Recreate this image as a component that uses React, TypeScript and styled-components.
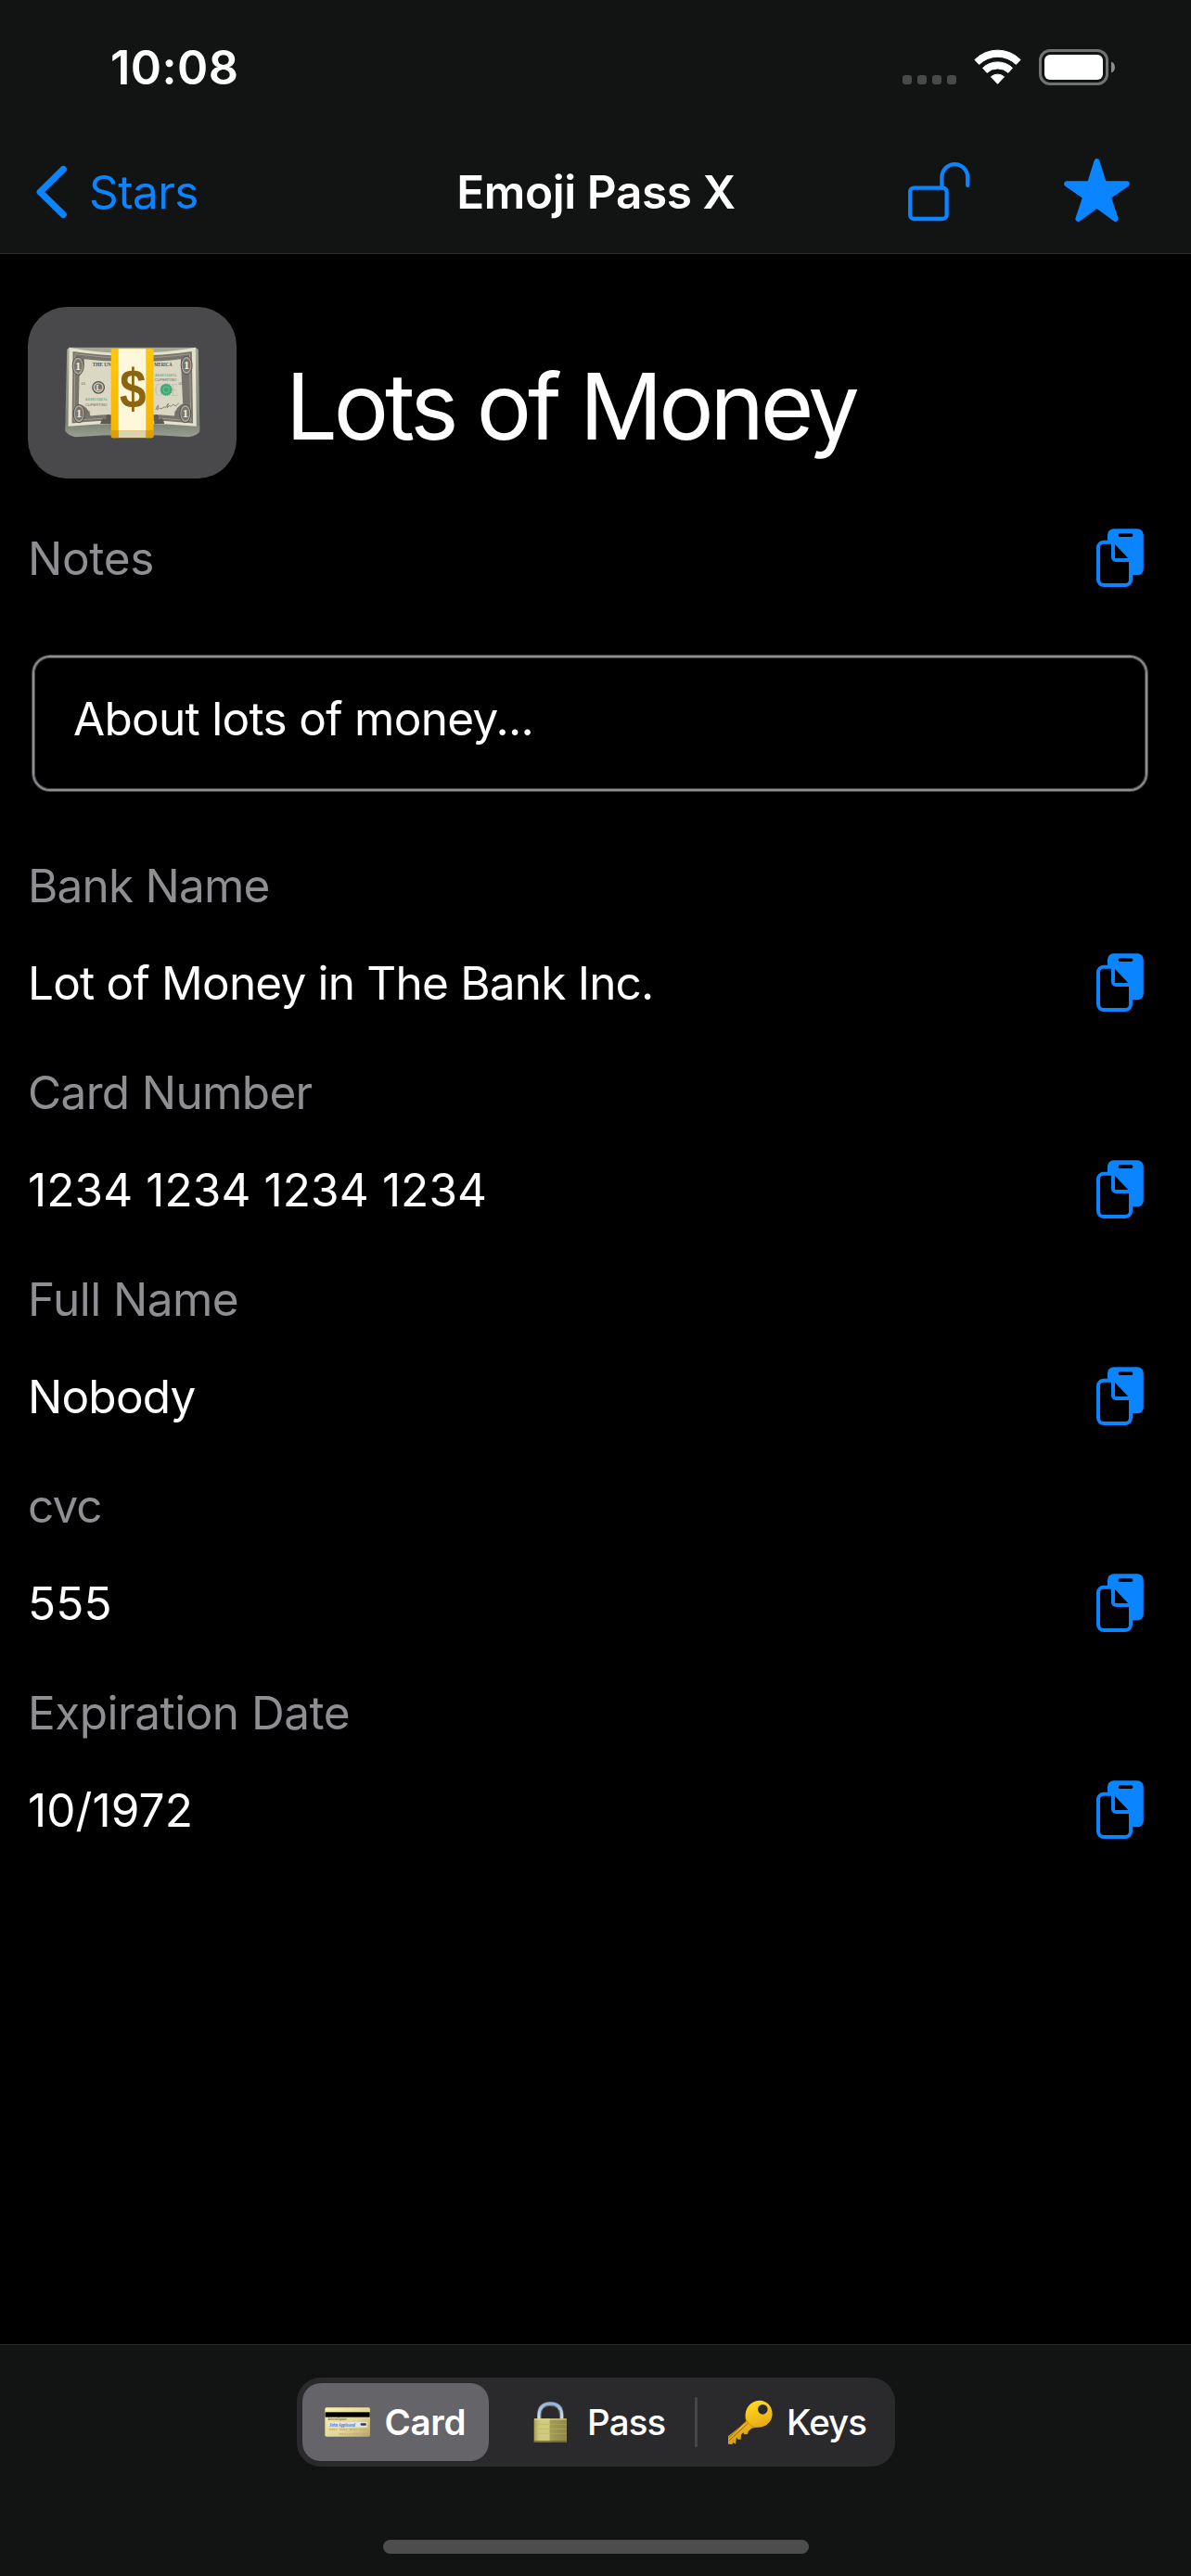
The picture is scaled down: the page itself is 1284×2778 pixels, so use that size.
import React from "react";
import styled, { createGlobalStyle } from "styled-components";

const BLUE = "#0a84ff";
const GRAY = "#8e8e93";
const GRAY_EDGE = "#47474a";
const BAR = "#121413";

const GlobalStyle = createGlobalStyle`
  *, *::before, *::after { box-sizing: border-box; }
  html, body { margin: 0; padding: 0; background: #000; }
  body { font-family: Inter, "Liberation Sans", sans-serif; -webkit-font-smoothing: antialiased; }
  svg { display: block; flex: none; }
`;

const Screen = styled.div`
  display: flex;
  flex-direction: column;
  width: 1284px;
  height: 2778px;
  background: #000;
  color: #fff;
  overflow: hidden;
`;

const TopBar = styled.header`
  display: flex;
  flex-direction: column;
  height: 274px;
  background: ${BAR};
  border-bottom: 1px solid #2a2b2b;
`;

const StatusRow = styled.div`
  display: flex;
  align-items: center;
  justify-content: space-between;
  height: 146px;
  padding: 0 81px 0 119px;
`;

const Text = styled.span<{ $track?: number }>`
  white-space: nowrap;
  letter-spacing: ${(p) => p.$track ?? 0}px;
`;

const Clock = styled(Text)`
  font-size: 50.5px;
  font-weight: 600;
  line-height: 60px;
`;

const StatusIcons = styled.div`
  display: flex;
  align-items: center;
  gap: 19px;
`;

const NavRow = styled.nav`
  display: grid;
  grid-template-columns: 1fr auto 1fr;
  align-items: center;
  height: 122px;
  padding: 0 66px 0 39px;
`;

const BackButton = styled.button`
  display: flex;
  align-items: center;
  gap: 24px;
  padding: 0;
  border: 0;
  background: none;
  color: ${BLUE};
  font: inherit;
`;

const BackLabel = styled(Text)`
  font-size: 49.5px;
  line-height: 60px;
`;

const NavTitle = styled(Text)`
  font-size: 49.5px;
  font-weight: 600;
  line-height: 60px;
  padding-left: 28px;
`;

const NavActions = styled.div`
  display: flex;
  align-items: center;
  justify-content: flex-end;
  gap: 101px;
`;

const Content = styled.main`
  flex: 1;
  display: flex;
  flex-direction: column;
  padding: 57px 47px 0 30px;
`;

const Heading = styled.div`
  display: flex;
  align-items: center;
  height: 185px;
  gap: 53px;
  margin-bottom: 53px;
`;

const EmojiTile = styled.div`
  display: flex;
  align-items: center;
  justify-content: center;
  width: 225px;
  height: 185px;
  border-radius: 42px;
  background: #49494b;
`;

const ItemTitle = styled(Text)`
  font-size: 99px;
  line-height: 120px;
  padding-top: 29px;
`;

const Row = styled.div`
  display: flex;
  align-items: center;
  justify-content: space-between;
  height: 66px;
  padding-right: 3px;
`;

const Label = styled(Text)`
  color: ${GRAY};
  font-size: 49.5px;
  line-height: 60px;
`;

const Value = styled(Text)`
  font-size: 49.5px;
  line-height: 60px;
`;

const NotesBox = styled.div`
  height: 146px;
  margin: 72px 0 72px 5px;
  padding: 36px 42px;
  border: 2px solid ${GRAY};
  border-radius: 19px;
  box-shadow: 0 0 0 1px ${GRAY_EDGE}, inset 0 0 0 1px ${GRAY_EDGE};
  display: flex;
  align-items: flex-start;
`;

const Field = styled.section`
  display: flex;
  flex-direction: column;
  gap: 42px;
  height: 223px;
`;

const BottomBar = styled.footer`
  display: flex;
  flex-direction: column;
  align-items: center;
  height: 250px;
  padding-top: 35px;
  background: ${BAR};
  border-top: 1px solid #2a2b2b;
`;

const Segments = styled.div`
  display: flex;
  align-items: center;
  width: 645px;
  height: 96px;
  padding: 6px;
  border-radius: 26px;
  background: #2a2a2c;
`;

const Segment = styled.button<{ $width: number; $inset: number; $active?: boolean }>`
  display: flex;
  align-items: center;
  gap: 15px;
  width: ${(p) => p.$width}px;
  height: 84px;
  padding: 0 0 0 ${(p) => p.$inset}px;
  border: 0;
  border-radius: 20px;
  background: ${(p) => (p.$active ? "#656469" : "transparent")};
  color: #fff;
  font-family: inherit;
  font-size: 38.5px;
  font-weight: ${(p) => (p.$active ? 600 : 500)};
  line-height: 48px;
`;

const EmojiSlot = styled.span`
  display: flex;
  justify-content: center;
  width: 49px;
`;

const Divider = styled.div`
  width: 3px;
  height: 54px;
  border-radius: 2px;
  background: #464649;
`;

const HomeIndicator = styled.div`
  width: 459px;
  height: 15px;
  margin-top: 79px;
  border-radius: 8px;
  background: #4d4d4d;
`;

const SignalDots = () => (
  <svg width="58" height="40" viewBox="0 0 58 40" fill="#484948">
    {[0, 16, 32, 48].map((x) => (
      <rect key={x} x={x} y="28" width="10" height="10" rx="3" />
    ))}
  </svg>
);

const Wifi = () => (
  <svg width="51" height="40" viewBox="0 0 51 40" fill="#fff" stroke="#fff" strokeWidth="1" strokeLinejoin="round">
    <path d="M0.9 11.4A34.6 34.6 0 0 1 50.1 11.4L45.4 16.4A28.4 28.4 0 0 0 5.6 16.4Z" />
    <path d="M9.5 20.3A23.2 23.2 0 0 1 41.5 20.3L37 25.4A17 17 0 0 0 14 25.4Z" />
    <path d="M18.4 29.8A10.8 10.8 0 0 1 32.6 29.8L25.5 37.3Z" />
  </svg>
);

const Battery = () => (
  <svg width="83" height="40" viewBox="0 0 83 40">
    <rect x="1.5" y="1.5" width="72" height="36" rx="10.5" fill="none" stroke="#717272" strokeWidth="3" />
    <rect x="6" y="6" width="63" height="27" rx="6" fill="#fff" />
    <path d="M78 13.5C83.3 15 83.3 24 78 25.5Z" fill="#8a8b8a" />
  </svg>
);

const Chevron = () => (
  <svg width="33" height="58" viewBox="0 0 33 58" fill="none" stroke={BLUE} strokeWidth="7.2" strokeLinecap="round" strokeLinejoin="round">
    <path d="M29.2 4.6L4.2 29L29.2 53.4" />
  </svg>
);

const OpenLock = () => (
  <svg width="67" height="64" viewBox="0 0 67 64" fill="none" stroke={BLUE} strokeWidth="4.3" strokeLinecap="round">
    <rect x="2.2" y="27.6" width="39.4" height="33.4" rx="4" />
    <path d="M36.4 27.6V16.4A13.9 14.2 0 0 1 64.2 16.4V25" />
  </svg>
);

const Star = () => (
  <svg width="71" height="72" viewBox="0 0 71 72" fill={BLUE} stroke={BLUE} strokeWidth="6" strokeLinejoin="round">
    <path d="M35.5 3.2L43 26.9L67.8 27.2L47.7 41.3L55.6 65L35.5 50.4L15.4 65L23.3 41.3L3.2 27.2L28 26.9Z" />
  </svg>
);

const CopyIcon = () => (
  <svg width="52" height="66" viewBox="0 0 52 66">
    <rect x="12" y="1.3" width="38.8" height="50" rx="6.5" fill={BLUE} />
    <rect x="23.7" y="6.3" width="15.6" height="3.7" rx="1.8" fill="#000" />
    <path
      d="M18 15.7H8a6 6 0 0 0-6 6V56a6 6 0 0 0 6 6H31a6 6 0 0 0 6-6V35H21a3 3 0 0 1-3-3Z"
      fill="#000"
      stroke={BLUE}
      strokeWidth="4"
      strokeLinejoin="round"
    />
    <path d="M20 18V33H34.3Z" fill="#000" />
  </svg>
);

const Bill = () => (
  <>
    <path d="M221 190Q320 210 426 208Q535 208 631 190L634 446Q530 436 426 437Q320 436 218 446Z" fill="#e4e2cf" />
    <path d="M233 203Q330 218 426 217Q525 217 619 203L623 436Q525 426 426 427Q325 426 230 436Z" fill="#77746c" />
    <path d="M240 211Q330 225 426 224Q525 224 612 211L616 428Q525 418 426 419Q325 418 237 428Z" fill="none" stroke="#b4b09f" strokeWidth="2" />
    <path d="M270 228Q345 238 426 236Q510 238 583 228L590 372Q566 382 562 412Q500 406 426 408Q350 406 290 412Q282 380 252 374L254 284Q272 262 270 228Z" fill="#dad8c4" />
  </>
);

const MoneyEmoji = () => (
  <svg width="146" height="99" viewBox="208 188 438 298">
    <defs>
      <linearGradient id="billEdge" x1="0" y1="0" x2="0" y2="1">
        <stop offset="0" stopColor="#a5a995" />
        <stop offset="0.85" stopColor="#7d8475" />
        <stop offset="1" stopColor="#9aa091" />
      </linearGradient>
      <linearGradient id="bandGold" x1="0" y1="0" x2="0" y2="1">
        <stop offset="0" stopColor="#fdc80c" />
        <stop offset="0.9" stopColor="#f8b500" />
        <stop offset="1" stopColor="#cf9500" />
      </linearGradient>
    </defs>
    <path d="M214 196L222 190H631L640 196L645 462Q640 475 608 481Q520 474 426 474Q330 474 241 481Q212 474 208 460Z" fill="url(#billEdge)" />
    <Bill />
    {[[250, 250], [602, 248], [253, 405], [598, 405]].map(([x, y]) => (
      <g key={`${x}-${y}`}>
        <ellipse cx={x} cy={y} rx="18" ry="29" fill="#aaa79a" stroke="#514f4a" strokeWidth="3" />
        <ellipse cx={x} cy={y} rx="13" ry="22" fill="#77746c" />
        <text x={x} y={y + 13} textAnchor="middle" fontFamily="Liberation Serif, serif" fontWeight="700" fontSize="38" fill="#eeebda">1</text>
      </g>
    ))}
    <g fontFamily="Liberation Serif, serif" fontWeight="700" fontSize="20" fill="#55524b">
      <text x="297" y="252" textLength="60" lengthAdjust="spacingAndGlyphs">THE UN</text>
      <text x="497" y="251" textLength="58" lengthAdjust="spacingAndGlyphs">MERICA</text>
    </g>
    <g fontFamily="Liberation Sans, sans-serif" fontSize="13" fill="#66635c">
      <text x="273" y="380" textLength="72" lengthAdjust="spacingAndGlyphs">CUPERTINO</text>
      <text x="498" y="299" textLength="72" lengthAdjust="spacingAndGlyphs">CUPERTINO</text>
      <text x="260" y="312">01</text>
      <text x="576" y="312">01</text>
      <text x="276" y="404">01</text>
      <text x="562" y="404">01</text>
    </g>
    <g fontFamily="Liberation Sans, sans-serif" fontWeight="700" fontSize="11" fill="#62b68c">
      <text x="273" y="363" textLength="72">A84810481L</text>
      <text x="499" y="284" textLength="72">A84810481L</text>
    </g>
    <circle cx="316" cy="320" r="19" fill="#c9c6b4" stroke="#55534c" strokeWidth="4" />
    <circle cx="316" cy="320" r="12" fill="#77746c" />
    <text x="316" y="329" textAnchor="middle" fontFamily="Liberation Serif, serif" fontWeight="700" fontSize="24" fill="#eeebda">L</text>
    <text x="499" y="347" textLength="75" lengthAdjust="spacingAndGlyphs" fontFamily="Liberation Serif, serif" fontSize="56" fill="#c4c1b0">ONE</text>
    <circle cx="536" cy="327" r="18" fill="#3fa877" stroke="#3fa877" strokeWidth="4" strokeDasharray="4 3" />
    <circle cx="536" cy="327" r="10" fill="none" stroke="#8fd0b0" strokeWidth="2" />
    <path d="M502 392q6-16 8-14t-3 14q8-8 10-4t8-2 8 0l10-14-4 14q8-10 10-6t6-2 8 0 14-8" fill="none" stroke="#5a5852" strokeWidth="2" />
    <path d="M322 438Q330 410 340 425Q340 400 357 412V438Z M530 438Q524 410 512 425Q512 400 497 412V438Z" fill="#5d5a53" />
    <path d="M357 195H495V478Q495 484 489 484H363Q357 484 357 478Z" fill="url(#bandGold)" />
    <path d="M381 195H470V460H381Z" fill="#fff7d9" />
    <path d="M381 460H470V483H381Z" fill="#d9d1b0" />
    <path d="M357 459H381V484H363Q357 484 357 478Z M470 459H495V478Q495 484 489 484H470Z" fill="#dba000" />
    <text x="428" y="386" textAnchor="middle" fontFamily="Liberation Sans, sans-serif" fontWeight="700" fontSize="176" textLength="86" lengthAdjust="spacingAndGlyphs" fill="#8c6510">$</text>
  </svg>
);

const CardEmoji = () => (
  <svg width="49.3" height="32" viewBox="153 260 148 96">
    <defs>
      <linearGradient id="cardFace" x1="0" y1="0" x2="1" y2="1">
        <stop offset="0" stopColor="#fbf3ae" />
        <stop offset="0.6" stopColor="#e2d596" />
        <stop offset="1" stopColor="#b9a569" />
      </linearGradient>
    </defs>
    <rect x="154" y="261" width="146" height="94" rx="5" fill="url(#cardFace)" />
    <rect x="155" y="276" width="144" height="16" fill="#000" />
    <rect x="163" y="308" width="128" height="17" fill="#e6e6e2" />
    <text x="164" y="303" fontSize="8" textLength="60" lengthAdjust="spacingAndGlyphs" fontFamily="Liberation Sans, sans-serif" fill="#6d6646">Authorized Signature</text>
    <text x="168" y="323" fontSize="19" fontStyle="italic" textLength="84" lengthAdjust="spacingAndGlyphs" fontFamily="Liberation Serif, serif" fill="#4a74c4">John Appleseed</text>
    <rect x="269" y="312" width="19" height="7" rx="3" fill="#3c3c42" />
    <g fontSize="10" fontFamily="Liberation Mono, monospace" fill="#b8ab78">
      <text x="168" y="336" textLength="122">8087 6253 5022 2148</text>
      <text x="200" y="349" textLength="92">RECYCLER WEB</text>
    </g>
  </svg>
);

const LockEmoji = () => (
  <svg width="36.7" height="44.7" viewBox="826 242 110 134">
    <defs>
      <linearGradient id="lockBody" x1="0" y1="0" x2="1" y2="0">
        <stop offset="0" stopColor="#a79f52" />
        <stop offset="0.15" stopColor="#cfc97b" />
        <stop offset="0.46" stopColor="#d0ca7e" />
        <stop offset="0.5" stopColor="#a39d57" />
        <stop offset="1" stopColor="#8f8848" />
      </linearGradient>
      <linearGradient id="lockBow" x1="0" y1="0" x2="0" y2="1">
        <stop offset="0" stopColor="#8fb3e2" />
        <stop offset="1" stopColor="#dfe6ea" />
      </linearGradient>
    </defs>
    <path d="M845 300V285Q845 250 881 249Q917 250 917 285V300" fill="none" stroke="#676c72" strokeWidth="14" />
    <path d="M844 300V285Q845 249 881 248Q917 249 918 285V300" fill="none" stroke="url(#lockBow)" strokeWidth="9" />
    <rect x="828" y="297" width="106" height="77" rx="2" fill="url(#lockBody)" />
    <path d="M829 299H933" stroke="#e4de93" strokeWidth="3" />
    <path d="M830 315H932M830 330H932M830 345H932" stroke="#b9b269" strokeWidth="1.5" />
    <path d="M829 371H933" stroke="#6a6120" strokeWidth="5" />
  </svg>
);

const KeyEmoji = () => (
  <svg width="49.3" height="48.7" viewBox="432 234 148 146">
    <defs>
      <linearGradient id="keyGold" x1="0.3" y1="0" x2="0.6" y2="1">
        <stop offset="0" stopColor="#ffe01f" />
        <stop offset="0.5" stopColor="#f0b91a" />
        <stop offset="1" stopColor="#c98e15" />
      </linearGradient>
    </defs>
    <path
      fillRule="evenodd"
      d="M491 292C488 262 507 237 536 236C561 236 579 256 578 281C576 309 553 325 527 323L511 326L500 337L498 345L487 346L484 340L477 347L476 362L467 362L462 356L459 378L452 372L448 378L435 377V352L493 305ZM547 249A16 16 0 1 0 547 281A16 16 0 1 0 547 249Z"
      fill="url(#keyGold)"
    />
    <path d="M438 366L500 309M436 357L494 302" stroke="#97640c" strokeWidth="3" fill="none" />
    <path d="M493 297Q500 318 523 323" stroke="#c88f12" strokeWidth="3" fill="none" />
  </svg>
);

const fields = [
  { label: "Bank Name", labelTrack: -0.8, value: "Lot of Money in The Bank Inc.", valueTrack: -0.8 },
  { label: "Card Number", labelTrack: -0.65, value: "1234 1234 1234 1234", valueTrack: 0.1 },
  { label: "Full Name", labelTrack: -0.55, value: "Nobody", valueTrack: -0.8 },
  { label: "cvc", labelTrack: -0.9, value: "555", valueTrack: 0.1 },
  { label: "Expiration Date", labelTrack: -0.5, value: "10/1972", valueTrack: 0.1 },
];

export default function App() {
  return (
    <Screen>
      <GlobalStyle />
      <TopBar>
        <StatusRow>
          <Clock $track={0.4}>10:08</Clock>
          <StatusIcons>
            <SignalDots />
            <Wifi />
            <Battery />
          </StatusIcons>
        </StatusRow>
        <NavRow>
          <BackButton>
            <Chevron />
            <BackLabel $track={-0.6}>Stars</BackLabel>
          </BackButton>
          <NavTitle $track={-0.4}>Emoji Pass X</NavTitle>
          <NavActions>
            <OpenLock />
            <Star />
          </NavActions>
        </NavRow>
      </TopBar>

      <Content>
        <Heading>
          <EmojiTile>
            <MoneyEmoji />
          </EmojiTile>
          <ItemTitle $track={-4.2}>Lots of Money</ItemTitle>
        </Heading>
        <Row>
          <Label $track={-0.3}>Notes</Label>
          <CopyIcon />
        </Row>
        <NotesBox>
          <Value $track={-0.7}>About lots of money...</Value>
        </NotesBox>
        {fields.map((f) => (
          <Field key={f.label}>
            <Label $track={f.labelTrack}>{f.label}</Label>
            <Row>
              <Value $track={f.valueTrack}>{f.value}</Value>
              <CopyIcon />
            </Row>
          </Field>
        ))}
      </Content>

      <BottomBar>
        <Segments>
          <Segment $width={201} $inset={25} $active>
            <EmojiSlot><CardEmoji /></EmojiSlot>
            <Text $track={-0.3}>Card</Text>
          </Segment>
          <Segment $width={222} $inset={42.6}>
            <EmojiSlot><LockEmoji /></EmojiSlot>
            <Text $track={-0.9}>Pass</Text>
          </Segment>
          <Divider />
          <Segment $width={207} $inset={32.6}>
            <EmojiSlot><KeyEmoji /></EmojiSlot>
            <Text $track={-0.9}>Keys</Text>
          </Segment>
        </Segments>
        <HomeIndicator />
      </BottomBar>
    </Screen>
  );
}
